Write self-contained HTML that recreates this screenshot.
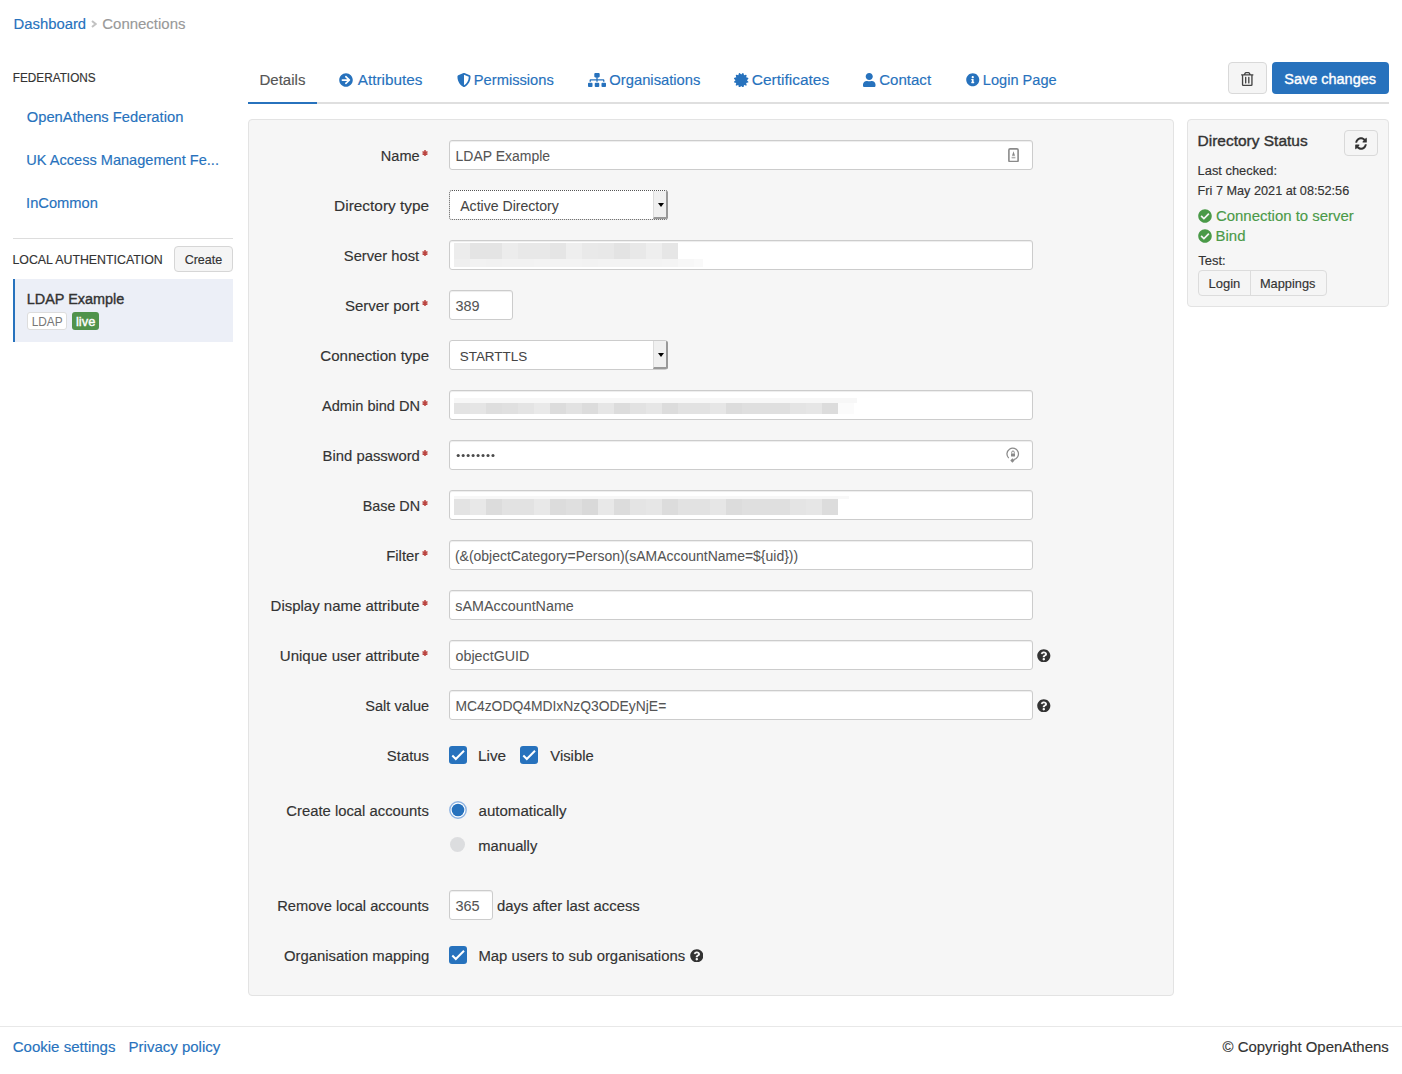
<!DOCTYPE html>
<html><head><meta charset="utf-8"><title>Connections</title>
<style>
html,body{margin:0;padding:0;background:#fff;width:1402px;height:1074px;overflow:hidden;position:relative}
body{font-family:"Liberation Sans",sans-serif}
.t{position:absolute;white-space:nowrap;line-height:1;font-family:"Liberation Sans",sans-serif}
.r{position:absolute}
</style></head><body>
<div class="t" style="left:13.51px;top:17.00px;font-size:14.858px;color:#2772bd;-webkit-text-stroke:0.15px #2772bd;">Dashboard</div>
<svg class="r" style="left:91px;top:20px;width:6px;height:8px;" viewBox="0 0 6 8" preserveAspectRatio="none"><path d="M1 1 L4.7 4 L1 7" fill="none" stroke="#c2c2c2" stroke-width="2"/></svg>
<div class="t" style="left:102.25px;top:16.01px;font-size:14.977px;color:#999999;-webkit-text-stroke:0.15px #999999;">Connections</div>
<div class="t" style="left:12.76px;top:71.82px;font-size:11.795px;color:#333333;-webkit-text-stroke:0.15px #333333;transform:scaleY(1.0445);transform-origin:0 10.03px;">FEDERATIONS</div>
<div class="t" style="left:26.74px;top:110.01px;font-size:14.755px;color:#2772bd;-webkit-text-stroke:0.15px #2772bd;">OpenAthens Federation</div>
<div class="t" style="left:26.31px;top:152.81px;font-size:14.579px;color:#2772bd;-webkit-text-stroke:0.15px #2772bd;">UK Access Management Fe...</div>
<div class="t" style="left:26.08px;top:196.00px;font-size:14.699px;color:#2772bd;-webkit-text-stroke:0.15px #2772bd;">InCommon</div>
<div class="r" style="left:13px;top:238px;width:220px;height:1px;background:#dddddd"></div>
<div class="t" style="left:12.41px;top:254.03px;font-size:12.378px;color:#333333;-webkit-text-stroke:0.15px #333333;transform:scaleY(1.0537);transform-origin:0 10.52px;">LOCAL AUTHENTICATION</div>
<div class="r" style="left:174px;top:246px;width:59px;height:26px;background:#f5f5f5;border:1px solid #d6d6d6;border-radius:4px;box-sizing:border-box"></div>
<div class="t" style="left:184.67px;top:254.01px;font-size:12.530px;color:#333333;-webkit-text-stroke:0.15px #333333;">Create</div>
<div class="r" style="left:13px;top:279px;width:220px;height:63px;background:#eceff7;border-left:2px solid #2772bd;box-sizing:border-box"></div>
<div class="t" style="left:26.79px;top:291.80px;font-size:14.439px;color:#333333;-webkit-text-stroke:0.38px #333333;">LDAP Example</div>
<div class="r" style="left:27px;top:312px;width:40px;height:18px;background:#fff;border:1px solid #dddddd;border-radius:3px;box-sizing:border-box"></div>
<div class="t" style="left:31.65px;top:317.42px;font-size:11.855px;color:#777777;-webkit-text-stroke:0px #777777;">LDAP</div>
<div class="r" style="left:72px;top:312px;width:27px;height:18px;background:#50934b;border-radius:3px"></div>
<div class="t" style="left:76.01px;top:316.41px;font-size:12.878px;color:#ffffff;-webkit-text-stroke:0.38px #ffffff;">live</div>
<div class="r" style="left:248px;top:102px;width:1141px;height:2px;background:#dfdfdf"></div>
<div class="r" style="left:248px;top:102px;width:69px;height:2px;background:#2772bd"></div>
<div class="t" style="left:259.50px;top:72.01px;font-size:15.034px;color:#555555;-webkit-text-stroke:0.15px #555555;">Details</div>
<div class="t" style="left:357.72px;top:72.00px;font-size:15.317px;color:#2772bd;-webkit-text-stroke:0.15px #2772bd;">Attributes</div>
<div class="t" style="left:473.82px;top:73.00px;font-size:14.709px;color:#2772bd;-webkit-text-stroke:0.15px #2772bd;">Permissions</div>
<div class="t" style="left:609.33px;top:73.01px;font-size:14.778px;color:#2772bd;-webkit-text-stroke:0.15px #2772bd;">Organisations</div>
<div class="t" style="left:751.72px;top:72.02px;font-size:15.504px;color:#2772bd;-webkit-text-stroke:0.15px #2772bd;">Certificates</div>
<div class="t" style="left:879.25px;top:72.02px;font-size:15.044px;color:#2772bd;-webkit-text-stroke:0.15px #2772bd;">Contact</div>
<div class="t" style="left:982.83px;top:73.01px;font-size:14.590px;color:#2772bd;-webkit-text-stroke:0.15px #2772bd;">Login Page</div>
<svg class="r" style="left:339px;top:73px;width:14px;height:14px;" viewBox="0 0 512 512" preserveAspectRatio="none"><path fill="#2772bd" d="M256 8c137 0 248 111 248 248S393 504 256 504 8 393 8 256 119 8 256 8zm-28.9 143.6l75.5 72.4H120c-13.3 0-24 10.7-24 24v16c0 13.3 10.7 24 24 24h182.6l-75.5 72.4c-9.7 9.3-9.9 24.8-.4 34.3l11 10.9c9.4 9.4 24.6 9.4 33.9 0L404.3 273c9.4-9.4 9.4-24.6 0-33.9L271.6 106.3c-9.4-9.4-24.6-9.4-33.9 0l-11 10.9c-9.5 9.6-9.3 25.1.4 34.4z"/></svg>
<svg class="r" style="left:456.5px;top:73px;width:14.0px;height:14px;" viewBox="0 0 512 512" preserveAspectRatio="none"><path fill="#2772bd" d="M466.5 83.7l-192-80a48.15 48.15 0 0 0-36.9 0l-192 80C27.7 91.1 16 108.6 16 128c0 198.5 114.5 335.7 221.5 380.3 11.8 4.9 25.1 4.9 36.9 0C360.1 472.6 496 349.3 496 128c0-19.4-11.7-36.9-29.5-44.3zM256.1 446.3l-.1-381 175.9 73.3c-3.3 151.4-82.1 261.1-175.8 307.7z"/></svg>
<svg class="r" style="left:588px;top:73px;width:18px;height:14px;" viewBox="0 0 640 512" preserveAspectRatio="none"><path fill="#2772bd" d="M128 352H32c-17.67 0-32 14.33-32 32v96c0 17.67 14.33 32 32 32h96c17.67 0 32-14.33 32-32v-96c0-17.67-14.33-32-32-32zm-24-80h192v48h48v-48h192v48h48v-57.59c0-21.17-17.23-38.41-38.41-38.41H344v-64h40c17.67 0 32-14.33 32-32V32c0-17.67-14.33-32-32-32H256c-17.67 0-32 14.33-32 32v96c0 17.67 14.33 32 32 32h40v64H94.41C73.23 224 56 241.23 56 262.41V320h48v-48zm264 80h-96c-17.67 0-32 14.33-32 32v96c0 17.67 14.33 32 32 32h96c17.67 0 32-14.33 32-32v-96c0-17.67-14.33-32-32-32zm240 0h-96c-17.67 0-32 14.33-32 32v96c0 17.67 14.33 32 32 32h96c17.67 0 32-14.33 32-32v-96c0-17.67-14.33-32-32-32z"/></svg>
<svg class="r" style="left:734.3px;top:72.8px;width:14.400000000000091px;height:14.400000000000006px;" viewBox="0 0 512 512" preserveAspectRatio="none"><path fill="#2772bd" d="M458.622 255.92l45.985-45.005c13.708-12.977 7.316-36.039-10.664-40.339l-62.65-15.99 17.661-62.015c4.991-17.838-11.829-34.663-29.661-29.671l-61.994 17.667-15.984-62.671C337.085.197 313.765-6.276 300.99 7.228L256 53.57 211.011 7.229c-12.63-13.351-36.047-7.234-40.325 10.668l-15.984 62.671-61.995-17.667C74.87 57.907 58.056 74.738 63.046 92.572l17.661 62.015-62.65 15.99C.069 174.878-6.31 197.944 7.392 210.915l45.985 45.005-45.985 45.004c-13.708 12.977-7.316 36.039 10.664 40.339l62.65 15.99-17.661 62.015c-4.991 17.838 11.829 34.663 29.661 29.671l61.994-17.667 15.984 62.671c4.439 18.575 27.696 24.018 40.325 10.668L256 458.61l44.989 46.001c12.5 13.488 35.987 7.486 40.325-10.668l15.984-62.671 61.994 17.667c17.836 4.994 34.651-11.837 29.661-29.671l-17.661-62.015 62.65-15.99c17.987-4.302 24.366-27.367 10.664-40.339l-45.984-45.004z"/></svg>
<svg class="r" style="left:863px;top:72.5px;width:12.5px;height:14.0px;" viewBox="0 0 448 512" preserveAspectRatio="none"><path fill="#2772bd" d="M224 256c70.7 0 128-57.3 128-128S294.7 0 224 0 96 57.3 96 128s57.3 128 128 128zm89.6 32h-16.7c-22.2 10.2-46.9 16-72.9 16s-50.6-5.8-72.9-16h-16.7C60.2 288 0 348.2 0 422.4V464c0 26.5 21.5 48 48 48h352c26.5 0 48-21.5 48-48v-41.6c0-74.2-60.2-134.4-134.4-134.4z"/></svg>
<svg class="r" style="left:966px;top:73px;width:13.5px;height:13.5px;" viewBox="0 0 512 512" preserveAspectRatio="none"><path fill="#2772bd" d="M256 8C119.043 8 8 119.083 8 256c0 136.997 111.043 248 248 248s248-111.003 248-248C504 119.083 392.957 8 256 8zm0 110c23.196 0 42 18.804 42 42s-18.804 42-42 42-42-18.804-42-42 18.804-42 42-42zm56 254c0 6.627-5.373 12-12 12h-88c-6.627 0-12-5.373-12-12v-24c0-6.627 5.373-12 12-12h12v-64h-12c-6.627 0-12-5.373-12-12v-24c0-6.627 5.373-12 12-12h64c6.627 0 12 5.373 12 12v100h12c6.627 0 12 5.373 12 12v24z"/></svg>
<div class="r" style="left:1228px;top:62px;width:39px;height:32px;background:#f5f5f5;border:1px solid #d9d9d9;border-radius:4px;box-sizing:border-box"></div>
<svg class="r" style="left:1241px;top:71.5px;width:12.5px;height:14.0px;" viewBox="0 0 448 512" preserveAspectRatio="none"><path fill="#444" d="M268 416h24a12 12 0 0 0 12-12V188a12 12 0 0 0-12-12h-24a12 12 0 0 0-12 12v216a12 12 0 0 0 12 12zM432 80h-82.41l-34-56.7A48 48 0 0 0 274.41 0H173.59a48 48 0 0 0-41.16 23.3L98.41 80H16A16 16 0 0 0 0 96v16a16 16 0 0 0 16 16h16v336a48 48 0 0 0 48 48h288a48 48 0 0 0 48-48V128h16a16 16 0 0 0 16-16V96a16 16 0 0 0-16-16zM171.84 50.910A6 6 0 0 1 177 48h94a6 6 0 0 1 5.15 2.91L293.61 80H154.39zM368 464H80V128h288zm-212-48h24a12 12 0 0 0 12-12V188a12 12 0 0 0-12-12h-24a12 12 0 0 0-12 12v216a12 12 0 0 0 12 12z"/></svg>
<div class="r" style="left:1272px;top:62px;width:117px;height:32px;background:#2772bd;border-radius:4px"></div>
<div class="t" style="left:1284.30px;top:72.00px;font-size:14.473px;color:#ffffff;-webkit-text-stroke:0.38px #ffffff;">Save changes</div>
<div class="r" style="left:248px;top:119px;width:926px;height:877px;background:#f6f6f6;border:1px solid #e3e3e3;border-radius:4px;box-sizing:border-box"></div>
<div class="t" style="left:380.83px;top:148.71px;font-size:14.567px;color:#333333;-webkit-text-stroke:0.15px #333333;">Name</div>
<svg class="r" style="left:421.1px;top:148.85px;width:8.0px;height:8.0px;" viewBox="0 0 8 8" preserveAspectRatio="none"><path d="M4 1.1V6.9M1.5 2.55L6.5 5.45M1.5 5.45L6.5 2.55" stroke="#bb4540" stroke-width="1.5"/></svg>
<div class="r" style="left:449px;top:140px;width:584px;height:30px;background:#fff;border:1px solid #cccccc;border-radius:3px;box-sizing:border-box;box-shadow:inset 0 1px 1px rgba(0,0,0,.075)"></div>
<div class="t" style="left:455.58px;top:149.72px;font-size:13.971px;color:#555555;-webkit-text-stroke:0.05px #555555;">LDAP Example</div>
<svg class="r" style="left:1007.5px;top:147.5px;width:11.0px;height:14.5px;" viewBox="0 0 11 14.5" preserveAspectRatio="none"><rect x="0.9" y="0.9" width="9.2" height="12.7" rx="1.2" fill="none" stroke="#8a8a8a" stroke-width="1.6"/><path d="M5.5 3.2 L7 7.8 H4 Z" fill="#8a8a8a"/><rect x="3.6" y="8.8" width="3.8" height="1.6" fill="#b0b0b0"/></svg>
<div class="t" style="left:334.07px;top:197.71px;font-size:15.430px;color:#333333;-webkit-text-stroke:0.15px #333333;">Directory type</div>
<div class="r" style="left:449px;top:190px;width:219px;height:30px;background:#fff;border:1px dotted #555;border-radius:3px;box-sizing:border-box"></div>
<div class="r" style="left:653px;top:191px;width:15px;height:28px;background:#f0f0f0;border-left:1px solid #dcdcdc;border-right:2px solid #999;border-bottom:2px solid #999;border-radius:0 2px 2px 0;box-sizing:border-box"></div>
<svg class="r" style="left:657.5px;top:202.5px;width:6.0px;height:4.0px;" viewBox="0 0 6 4" preserveAspectRatio="none"><path d="M0 0H6L3 4Z" fill="#000"/></svg>
<div class="t" style="left:460.23px;top:198.71px;font-size:14.092px;color:#444444;-webkit-text-stroke:0.05px #444444;">Active Directory</div>
<div class="t" style="left:343.84px;top:248.70px;font-size:14.723px;color:#333333;-webkit-text-stroke:0.15px #333333;">Server host</div>
<svg class="r" style="left:421.1px;top:248.85px;width:8.0px;height:8.000000000000028px;" viewBox="0 0 8 8" preserveAspectRatio="none"><path d="M4 1.1V6.9M1.5 2.55L6.5 5.45M1.5 5.45L6.5 2.55" stroke="#bb4540" stroke-width="1.5"/></svg>
<div class="r" style="left:449px;top:240px;width:584px;height:30px;background:#fff;border:1px solid #cccccc;border-radius:3px;box-sizing:border-box;box-shadow:inset 0 1px 1px rgba(0,0,0,.075)"></div>
<div class="t" style="left:344.93px;top:297.71px;font-size:14.995px;color:#333333;-webkit-text-stroke:0.15px #333333;">Server port</div>
<svg class="r" style="left:421.1px;top:298.85px;width:8.0px;height:8.0px;" viewBox="0 0 8 8" preserveAspectRatio="none"><path d="M4 1.1V6.9M1.5 2.55L6.5 5.45M1.5 5.45L6.5 2.55" stroke="#bb4540" stroke-width="1.5"/></svg>
<div class="r" style="left:449px;top:290px;width:64px;height:30px;background:#fff;border:1px solid #cccccc;border-radius:3px;box-sizing:border-box;box-shadow:inset 0 1px 1px rgba(0,0,0,.075)"></div>
<div class="t" style="left:455.52px;top:298.72px;font-size:14.430px;color:#555555;-webkit-text-stroke:0.05px #555555;">389</div>
<div class="t" style="left:320.25px;top:347.72px;font-size:15.077px;color:#333333;-webkit-text-stroke:0.15px #333333;">Connection type</div>
<div class="r" style="left:449px;top:340px;width:219px;height:30px;background:#fff;border:1px solid #cccccc;border-radius:3px;box-sizing:border-box"></div>
<div class="r" style="left:653px;top:341px;width:15px;height:28px;background:#f0f0f0;border-left:1px solid #dcdcdc;border-right:2px solid #999;border-bottom:2px solid #999;border-radius:0 2px 2px 0;box-sizing:border-box"></div>
<svg class="r" style="left:657.5px;top:352.5px;width:6.0px;height:4.0px;" viewBox="0 0 6 4" preserveAspectRatio="none"><path d="M0 0H6L3 4Z" fill="#000"/></svg>
<div class="t" style="left:459.69px;top:349.71px;font-size:13.469px;color:#444444;-webkit-text-stroke:0.05px #444444;">STARTTLS</div>
<div class="t" style="left:322.03px;top:398.71px;font-size:14.593px;color:#333333;-webkit-text-stroke:0.15px #333333;">Admin bind DN</div>
<svg class="r" style="left:421.1px;top:398.85px;width:8.0px;height:8.0px;" viewBox="0 0 8 8" preserveAspectRatio="none"><path d="M4 1.1V6.9M1.5 2.55L6.5 5.45M1.5 5.45L6.5 2.55" stroke="#bb4540" stroke-width="1.5"/></svg>
<div class="r" style="left:449px;top:390px;width:584px;height:30px;background:#fff;border:1px solid #cccccc;border-radius:3px;box-sizing:border-box;box-shadow:inset 0 1px 1px rgba(0,0,0,.075)"></div>
<div class="t" style="left:322.61px;top:448.70px;font-size:14.840px;color:#333333;-webkit-text-stroke:0.15px #333333;">Bind password</div>
<svg class="r" style="left:421.1px;top:448.85px;width:8.0px;height:8.0px;" viewBox="0 0 8 8" preserveAspectRatio="none"><path d="M4 1.1V6.9M1.5 2.55L6.5 5.45M1.5 5.45L6.5 2.55" stroke="#bb4540" stroke-width="1.5"/></svg>
<div class="r" style="left:449px;top:440px;width:584px;height:30px;background:#fff;border:1px solid #cccccc;border-radius:3px;box-sizing:border-box;box-shadow:inset 0 1px 1px rgba(0,0,0,.075)"></div>
<svg class="r" style="left:455px;top:452px;width:42px;height:7px;" viewBox="455 452 42 7" preserveAspectRatio="none"><circle cx="458.20" cy="455.5" r="1.55" fill="#4a4a4a"/><circle cx="463.17" cy="455.5" r="1.55" fill="#4a4a4a"/><circle cx="468.14" cy="455.5" r="1.55" fill="#4a4a4a"/><circle cx="473.11" cy="455.5" r="1.55" fill="#4a4a4a"/><circle cx="478.08" cy="455.5" r="1.55" fill="#4a4a4a"/><circle cx="483.05" cy="455.5" r="1.55" fill="#4a4a4a"/><circle cx="488.02" cy="455.5" r="1.55" fill="#4a4a4a"/><circle cx="492.99" cy="455.5" r="1.55" fill="#4a4a4a"/></svg>
<svg class="r" style="left:1004px;top:444px;width:18px;height:22px;" viewBox="1004 444 18 22" preserveAspectRatio="none"><path d="M1008.75 458.1 A5.75 5.75 0 1 1 1013.6 459.6" fill="none" stroke="#8a8a8a" stroke-width="1.25"/><path d="M1012.4 458.3 L1014.6 460.5 L1012.4 462.7 L1010.3 460.5Z" fill="#8a8a8a"/><path d="M1011.7 453.6 V452.3 A1.3 1.3 0 0 1 1014.3 452.3 V453.6" fill="none" stroke="#8a8a8a" stroke-width="1"/><rect x="1011" y="453.4" width="4" height="3.2" rx="0.5" fill="#8a8a8a"/></svg>
<div class="t" style="left:362.65px;top:498.70px;font-size:14.375px;color:#333333;-webkit-text-stroke:0.15px #333333;">Base DN</div>
<svg class="r" style="left:421.1px;top:498.85px;width:8.0px;height:8.0px;" viewBox="0 0 8 8" preserveAspectRatio="none"><path d="M4 1.1V6.9M1.5 2.55L6.5 5.45M1.5 5.45L6.5 2.55" stroke="#bb4540" stroke-width="1.5"/></svg>
<div class="r" style="left:449px;top:490px;width:584px;height:30px;background:#fff;border:1px solid #cccccc;border-radius:3px;box-sizing:border-box;box-shadow:inset 0 1px 1px rgba(0,0,0,.075)"></div>
<div class="t" style="left:386.21px;top:548.70px;font-size:14.871px;color:#333333;-webkit-text-stroke:0.15px #333333;">Filter</div>
<svg class="r" style="left:421.1px;top:548.85px;width:8.0px;height:8.0px;" viewBox="0 0 8 8" preserveAspectRatio="none"><path d="M4 1.1V6.9M1.5 2.55L6.5 5.45M1.5 5.45L6.5 2.55" stroke="#bb4540" stroke-width="1.5"/></svg>
<div class="r" style="left:449px;top:540px;width:584px;height:30px;background:#fff;border:1px solid #cccccc;border-radius:3px;box-sizing:border-box;box-shadow:inset 0 1px 1px rgba(0,0,0,.075)"></div>
<div class="t" style="left:454.96px;top:549.70px;font-size:13.970px;color:#555555;-webkit-text-stroke:0.05px #555555;">(&amp;(objectCategory=Person)(sAMAccountName=${uid}))</div>
<div class="t" style="left:270.60px;top:597.70px;font-size:14.982px;color:#333333;-webkit-text-stroke:0.15px #333333;">Display name attribute</div>
<svg class="r" style="left:421.1px;top:598.85px;width:8.0px;height:8.0px;" viewBox="0 0 8 8" preserveAspectRatio="none"><path d="M4 1.1V6.9M1.5 2.55L6.5 5.45M1.5 5.45L6.5 2.55" stroke="#bb4540" stroke-width="1.5"/></svg>
<div class="r" style="left:449px;top:590px;width:584px;height:30px;background:#fff;border:1px solid #cccccc;border-radius:3px;box-sizing:border-box;box-shadow:inset 0 1px 1px rgba(0,0,0,.075)"></div>
<div class="t" style="left:455.37px;top:598.71px;font-size:14.308px;color:#555555;-webkit-text-stroke:0.05px #555555;">sAMAccountName</div>
<div class="t" style="left:279.77px;top:647.70px;font-size:15.076px;color:#333333;-webkit-text-stroke:0.15px #333333;">Unique user attribute</div>
<svg class="r" style="left:421.1px;top:648.85px;width:8.0px;height:8.0px;" viewBox="0 0 8 8" preserveAspectRatio="none"><path d="M4 1.1V6.9M1.5 2.55L6.5 5.45M1.5 5.45L6.5 2.55" stroke="#bb4540" stroke-width="1.5"/></svg>
<div class="r" style="left:449px;top:640px;width:584px;height:30px;background:#fff;border:1px solid #cccccc;border-radius:3px;box-sizing:border-box;box-shadow:inset 0 1px 1px rgba(0,0,0,.075)"></div>
<div class="t" style="left:455.53px;top:648.71px;font-size:14.311px;color:#555555;-webkit-text-stroke:0.05px #555555;">objectGUID</div>
<svg class="r" style="left:1037.2px;top:648.8000000000001px;width:13.599999999999909px;height:13.599999999999909px;" viewBox="0 0 512 512" preserveAspectRatio="none"><path fill="#333" d="M504 256c0 136.997-111.043 248-248 248S8 392.997 8 256C8 119.083 119.043 8 256 8s248 111.083 248 248zM262.655 90c-54.497 0-89.255 22.957-116.549 63.758-3.536 5.286-2.353 12.415 2.715 16.258l34.699 26.310c5.205 3.947 12.621 3.008 16.665-2.122 17.864-22.658 30.113-35.797 57.303-35.797 20.429 0 45.698 13.148 45.698 32.958 0 14.976-12.363 22.667-32.534 33.976C247.128 238.528 216 254.941 216 296v4c0 6.627 5.373 12 12 12h56c6.627 0 12-5.373 12-12v-1.333c0-28.462 83.186-29.647 83.186-106.667 0-58.002-60.165-102-116.531-102zM256 338c-25.365 0-46 20.635-46 46 0 25.364 20.635 46 46 46s46-20.636 46-46c0-25.365-20.635-46-46-46z"/></svg>
<div class="t" style="left:365.35px;top:698.71px;font-size:14.535px;color:#333333;-webkit-text-stroke:0.15px #333333;">Salt value</div>
<div class="r" style="left:449px;top:690px;width:584px;height:30px;background:#fff;border:1px solid #cccccc;border-radius:3px;box-sizing:border-box;box-shadow:inset 0 1px 1px rgba(0,0,0,.075)"></div>
<div class="t" style="left:455.39px;top:699.70px;font-size:13.882px;color:#555555;-webkit-text-stroke:0.05px #555555;">MC4zODQ4MDIxNzQ3ODEyNjE=</div>
<svg class="r" style="left:1037.2px;top:698.8000000000001px;width:13.599999999999909px;height:13.599999999999909px;" viewBox="0 0 512 512" preserveAspectRatio="none"><path fill="#333" d="M504 256c0 136.997-111.043 248-248 248S8 392.997 8 256C8 119.083 119.043 8 256 8s248 111.083 248 248zM262.655 90c-54.497 0-89.255 22.957-116.549 63.758-3.536 5.286-2.353 12.415 2.715 16.258l34.699 26.310c5.205 3.947 12.621 3.008 16.665-2.122 17.864-22.658 30.113-35.797 57.303-35.797 20.429 0 45.698 13.148 45.698 32.958 0 14.976-12.363 22.667-32.534 33.976C247.128 238.528 216 254.941 216 296v4c0 6.627 5.373 12 12 12h56c6.627 0 12-5.373 12-12v-1.333c0-28.462 83.186-29.647 83.186-106.667 0-58.002-60.165-102-116.531-102zM256 338c-25.365 0-46 20.635-46 46 0 25.364 20.635 46 46 46s46-20.636 46-46c0-25.365-20.635-46-46-46z"/></svg>
<div class="t" style="left:386.83px;top:748.71px;font-size:14.882px;color:#333333;-webkit-text-stroke:0.15px #333333;">Status</div>
<div class="r" style="left:449px;top:746px;width:18px;height:18px;background:#2772bd;border-radius:3px"></div>
<svg class="r" style="left:449px;top:746px;width:18px;height:18px;" viewBox="0 0 18 18" preserveAspectRatio="none"><path d="M3.3 9.5 L6.8 13 L15 4.7" fill="none" stroke="#fff" stroke-width="2"/></svg>
<div class="t" style="left:477.97px;top:748.30px;font-size:15.380px;color:#333333;-webkit-text-stroke:0.15px #333333;">Live</div>
<div class="r" style="left:519.8px;top:746px;width:18.0px;height:18px;background:#2772bd;border-radius:3px"></div>
<svg class="r" style="left:519.8px;top:746px;width:18.0px;height:18px;" viewBox="0 0 18 18" preserveAspectRatio="none"><path d="M3.3 9.5 L6.8 13 L15 4.7" fill="none" stroke="#fff" stroke-width="2"/></svg>
<div class="t" style="left:550.33px;top:749.31px;font-size:14.817px;color:#333333;-webkit-text-stroke:0.15px #333333;">Visible</div>
<div class="t" style="left:286.26px;top:803.71px;font-size:14.848px;color:#333333;-webkit-text-stroke:0.15px #333333;">Create local accounts</div>
<svg class="r" style="left:449px;top:801px;width:18px;height:18px;" viewBox="0 0 18 18" preserveAspectRatio="none"><circle cx="9" cy="9" r="8.2" fill="#fff" stroke="#8db3e2" stroke-width="1.4"/><circle cx="9" cy="9" r="6.3" fill="#2772bd"/></svg>
<div class="t" style="left:478.52px;top:802.90px;font-size:15.073px;color:#333333;-webkit-text-stroke:0.15px #333333;">automatically</div>
<svg class="r" style="left:450.2px;top:837.2px;width:15.0px;height:15.0px;" viewBox="0 0 15 15" preserveAspectRatio="none"><circle cx="7.5" cy="7.5" r="7.5" fill="#dcdddf"/></svg>
<div class="t" style="left:478.24px;top:838.51px;font-size:14.758px;color:#333333;-webkit-text-stroke:0.15px #333333;">manually</div>
<div class="t" style="left:277.23px;top:898.71px;font-size:14.680px;color:#333333;-webkit-text-stroke:0.15px #333333;">Remove local accounts</div>
<div class="r" style="left:449px;top:890px;width:44px;height:30px;background:#fff;border:1px solid #cccccc;border-radius:3px;box-sizing:border-box;box-shadow:inset 0 1px 1px rgba(0,0,0,.075)"></div>
<div class="t" style="left:455.42px;top:898.70px;font-size:14.511px;color:#555555;-webkit-text-stroke:0.05px #555555;">365</div>
<div class="t" style="left:496.91px;top:899.00px;font-size:14.864px;color:#333333;-webkit-text-stroke:0.15px #333333;">days after last access</div>
<div class="t" style="left:283.93px;top:948.70px;font-size:14.873px;color:#333333;-webkit-text-stroke:0.15px #333333;">Organisation mapping</div>
<div class="r" style="left:449px;top:946px;width:18px;height:18px;background:#2772bd;border-radius:3px"></div>
<svg class="r" style="left:449px;top:946px;width:18px;height:18px;" viewBox="0 0 18 18" preserveAspectRatio="none"><path d="M3.3 9.5 L6.8 13 L15 4.7" fill="none" stroke="#fff" stroke-width="2"/></svg>
<div class="t" style="left:478.41px;top:949.01px;font-size:14.884px;color:#333333;-webkit-text-stroke:0.15px #333333;">Map users to sub organisations</div>
<svg class="r" style="left:689.9000000000001px;top:948.8000000000001px;width:13.599999999999909px;height:13.599999999999909px;" viewBox="0 0 512 512" preserveAspectRatio="none"><path fill="#333" d="M504 256c0 136.997-111.043 248-248 248S8 392.997 8 256C8 119.083 119.043 8 256 8s248 111.083 248 248zM262.655 90c-54.497 0-89.255 22.957-116.549 63.758-3.536 5.286-2.353 12.415 2.715 16.258l34.699 26.310c5.205 3.947 12.621 3.008 16.665-2.122 17.864-22.658 30.113-35.797 57.303-35.797 20.429 0 45.698 13.148 45.698 32.958 0 14.976-12.363 22.667-32.534 33.976C247.128 238.528 216 254.941 216 296v4c0 6.627 5.373 12 12 12h56c6.627 0 12-5.373 12-12v-1.333c0-28.462 83.186-29.647 83.186-106.667 0-58.002-60.165-102-116.531-102zM256 338c-25.365 0-46 20.635-46 46 0 25.364 20.635 46 46 46s46-20.636 46-46c0-25.365-20.635-46-46-46z"/></svg>
<div class="r" style="left:1187px;top:119px;width:202px;height:188px;background:#f6f6f6;border:1px solid #e3e3e3;border-radius:4px;box-sizing:border-box"></div>
<div class="t" style="left:1197.61px;top:132.80px;font-size:15.486px;color:#333333;-webkit-text-stroke:0.38px #333333;">Directory Status</div>
<div class="r" style="left:1344px;top:130px;width:34px;height:26px;background:#f5f5f5;border:1px solid #d9d9d9;border-radius:4px;box-sizing:border-box"></div>
<svg class="r" style="left:1355px;top:136.5px;width:12px;height:13.0px;" viewBox="0 0 512 512" preserveAspectRatio="none"><path fill="#333" d="M370.72 133.28C339.458 104.008 298.888 87.962 255.848 88c-77.458.068-144.328 53.178-162.791 126.85-1.344 5.363-6.122 9.15-11.651 9.15H24.103c-7.498 0-13.194-6.807-11.807-14.176C33.933 94.924 134.813 8 256 8c66.448 0 126.791 26.136 171.315 68.685L463.03 40.970C478.149 25.851 504 36.559 504 57.941V192c0 13.255-10.745 24-24 24H345.941c-21.382 0-32.09-25.851-16.971-40.971l41.75-41.749zM32 296h134.059c21.382 0 32.090 25.851 16.971 40.971l-41.75 41.750c31.262 29.273 71.835 45.319 114.876 45.280 77.418-.07 144.315-53.144 162.787-126.849 1.344-5.363 6.122-9.15 11.651-9.15h57.304c7.498 0 13.194 6.807 11.807 14.176C478.067 417.076 377.187 504 256 504c-66.448 0-126.791-26.136-171.315-68.685L48.970 471.030C33.851 486.149 8 475.441 8 454.059V320c0-13.255 10.745-24 24-24z"/></svg>
<div class="t" style="left:1197.57px;top:164.71px;font-size:12.883px;color:#333333;-webkit-text-stroke:0.15px #333333;">Last checked:</div>
<div class="t" style="left:1197.58px;top:184.91px;font-size:12.693px;color:#333333;-webkit-text-stroke:0.15px #333333;">Fri 7 May 2021 at 08:52:56</div>
<svg class="r" style="left:1198px;top:209px;width:14px;height:14px;" viewBox="0 0 512 512" preserveAspectRatio="none"><path fill="#4a9a48" d="M504 256c0 136.967-111.033 248-248 248S8 392.967 8 256 119.033 8 256 8s248 111.033 248 248zM227.314 387.314l184-184c6.248-6.248 6.248-16.379 0-22.627l-22.627-22.627c-6.248-6.249-16.379-6.249-22.628 0L216 308.118l-70.059-70.059c-6.248-6.248-16.379-6.248-22.628 0l-22.627 22.627c-6.248 6.248-6.248 16.379 0 22.627l104 104c6.249 6.249 16.379 6.249 22.628.001z"/></svg>
<div class="t" style="left:1215.95px;top:208.70px;font-size:14.945px;color:#4a9a48;-webkit-text-stroke:0.15px #4a9a48;">Connection to server</div>
<svg class="r" style="left:1198px;top:229px;width:14px;height:14px;" viewBox="0 0 512 512" preserveAspectRatio="none"><path fill="#4a9a48" d="M504 256c0 136.967-111.033 248-248 248S8 392.967 8 256 119.033 8 256 8s248 111.033 248 248zM227.314 387.314l184-184c6.248-6.248 6.248-16.379 0-22.627l-22.627-22.627c-6.248-6.249-16.379-6.249-22.628 0L216 308.118l-70.059-70.059c-6.248-6.248-16.379-6.248-22.628 0l-22.627 22.627c-6.248 6.248-6.248 16.379 0 22.627l104 104c6.249 6.249 16.379 6.249 22.628.001z"/></svg>
<div class="t" style="left:1215.50px;top:227.71px;font-size:14.987px;color:#4a9a48;-webkit-text-stroke:0.15px #4a9a48;">Bind</div>
<div class="t" style="left:1198.28px;top:253.91px;font-size:12.982px;color:#333333;-webkit-text-stroke:0.15px #333333;">Test:</div>
<div class="r" style="left:1198px;top:270px;width:129px;height:26px;background:#f5f5f5;border:1px solid #dcdcdc;border-radius:4px;box-sizing:border-box"></div>
<div class="r" style="left:1250px;top:270px;width:1px;height:26px;background:#dcdcdc"></div>
<div class="t" style="left:1208.46px;top:277.00px;font-size:13.000px;color:#333333;-webkit-text-stroke:0.15px #333333;">Login</div>
<div class="t" style="left:1259.98px;top:278.00px;font-size:12.796px;color:#333333;-webkit-text-stroke:0.15px #333333;">Mappings</div>
<div class="r" style="left:0px;top:1026px;width:1402px;height:1px;background:#e8e8e8"></div>
<div class="t" style="left:12.65px;top:1039.01px;font-size:15.052px;color:#2772bd;-webkit-text-stroke:0.15px #2772bd;">Cookie settings</div>
<div class="t" style="left:128.60px;top:1039.01px;font-size:15.008px;color:#2772bd;-webkit-text-stroke:0.15px #2772bd;">Privacy policy</div>
<div class="t" style="left:1222.58px;top:1040.01px;font-size:14.937px;color:#333333;-webkit-text-stroke:0.15px #333333;">© Copyright OpenAthens</div>
<div class="r" style="left:454px;top:243px;width:16px;height:16px;background:#ececec"></div>
<div class="r" style="left:470px;top:243px;width:16px;height:16px;background:#e4e4e4"></div>
<div class="r" style="left:486px;top:243px;width:16px;height:16px;background:#e4e4e4"></div>
<div class="r" style="left:502px;top:243px;width:16px;height:16px;background:#ececec"></div>
<div class="r" style="left:518px;top:243px;width:16px;height:16px;background:#e8e8e8"></div>
<div class="r" style="left:534px;top:243px;width:16px;height:16px;background:#e8e8e8"></div>
<div class="r" style="left:550px;top:243px;width:16px;height:16px;background:#e5e5e5"></div>
<div class="r" style="left:566px;top:243px;width:16px;height:16px;background:#eeeeee"></div>
<div class="r" style="left:582px;top:243px;width:16px;height:16px;background:#e9e9e9"></div>
<div class="r" style="left:598px;top:243px;width:16px;height:16px;background:#e8e8e8"></div>
<div class="r" style="left:614px;top:243px;width:16px;height:16px;background:#e3e3e3"></div>
<div class="r" style="left:630px;top:243px;width:16px;height:16px;background:#e8e8e8"></div>
<div class="r" style="left:646px;top:243px;width:16px;height:16px;background:#eeeeee"></div>
<div class="r" style="left:662px;top:243px;width:16px;height:16px;background:#e6e6e6"></div>
<div class="r" style="left:454px;top:259px;width:16px;height:8px;background:#efefef"></div>
<div class="r" style="left:470px;top:259px;width:16px;height:8px;background:#f2f2f2"></div>
<div class="r" style="left:486px;top:259px;width:16px;height:8px;background:#f1f1f1"></div>
<div class="r" style="left:502px;top:259px;width:16px;height:8px;background:#f2f2f2"></div>
<div class="r" style="left:518px;top:259px;width:16px;height:8px;background:#f2f2f2"></div>
<div class="r" style="left:534px;top:259px;width:16px;height:8px;background:#f3f3f3"></div>
<div class="r" style="left:550px;top:259px;width:16px;height:8px;background:#f3f3f3"></div>
<div class="r" style="left:566px;top:259px;width:16px;height:8px;background:#f3f3f3"></div>
<div class="r" style="left:582px;top:259px;width:16px;height:8px;background:#f2f2f2"></div>
<div class="r" style="left:598px;top:259px;width:16px;height:8px;background:#f3f3f3"></div>
<div class="r" style="left:614px;top:259px;width:16px;height:8px;background:#f3f3f3"></div>
<div class="r" style="left:630px;top:259px;width:16px;height:8px;background:#f3f3f3"></div>
<div class="r" style="left:646px;top:259px;width:16px;height:8px;background:#f3f3f3"></div>
<div class="r" style="left:662px;top:259px;width:16px;height:8px;background:#f4f4f4"></div>
<div class="r" style="left:678px;top:259px;width:16px;height:8px;background:#f7f7f7"></div>
<div class="r" style="left:694px;top:259px;width:9px;height:8px;background:#f9f9f9"></div>
<div class="r" style="left:454px;top:398px;width:16px;height:5px;background:#f7f7f7"></div>
<div class="r" style="left:470px;top:398px;width:16px;height:5px;background:#f7f7f7"></div>
<div class="r" style="left:486px;top:398px;width:16px;height:5px;background:#f7f7f7"></div>
<div class="r" style="left:502px;top:398px;width:16px;height:5px;background:#f7f7f7"></div>
<div class="r" style="left:518px;top:398px;width:16px;height:5px;background:#f7f7f7"></div>
<div class="r" style="left:534px;top:398px;width:16px;height:5px;background:#f7f7f7"></div>
<div class="r" style="left:550px;top:398px;width:16px;height:5px;background:#f7f7f7"></div>
<div class="r" style="left:566px;top:398px;width:16px;height:5px;background:#f7f7f7"></div>
<div class="r" style="left:582px;top:398px;width:16px;height:5px;background:#f7f7f7"></div>
<div class="r" style="left:598px;top:398px;width:16px;height:5px;background:#f7f7f7"></div>
<div class="r" style="left:614px;top:398px;width:16px;height:5px;background:#f7f7f7"></div>
<div class="r" style="left:630px;top:398px;width:16px;height:5px;background:#f7f7f7"></div>
<div class="r" style="left:646px;top:398px;width:16px;height:5px;background:#f7f7f7"></div>
<div class="r" style="left:662px;top:398px;width:16px;height:5px;background:#f7f7f7"></div>
<div class="r" style="left:678px;top:398px;width:16px;height:5px;background:#f7f7f7"></div>
<div class="r" style="left:694px;top:398px;width:16px;height:5px;background:#f7f7f7"></div>
<div class="r" style="left:710px;top:398px;width:16px;height:5px;background:#f7f7f7"></div>
<div class="r" style="left:726px;top:398px;width:16px;height:5px;background:#f7f7f7"></div>
<div class="r" style="left:742px;top:398px;width:16px;height:5px;background:#f7f7f7"></div>
<div class="r" style="left:758px;top:398px;width:16px;height:5px;background:#f7f7f7"></div>
<div class="r" style="left:774px;top:398px;width:16px;height:5px;background:#f7f7f7"></div>
<div class="r" style="left:790px;top:398px;width:16px;height:5px;background:#f7f7f7"></div>
<div class="r" style="left:806px;top:398px;width:16px;height:5px;background:#f7f7f7"></div>
<div class="r" style="left:822px;top:398px;width:16px;height:5px;background:#f7f7f7"></div>
<div class="r" style="left:838px;top:398px;width:16px;height:5px;background:#f7f7f7"></div>
<div class="r" style="left:854px;top:398px;width:3px;height:5px;background:#f7f7f7"></div>
<div class="r" style="left:454px;top:403px;width:16px;height:11px;background:#e3e3e3"></div>
<div class="r" style="left:470px;top:403px;width:16px;height:11px;background:#e5e5e5"></div>
<div class="r" style="left:486px;top:403px;width:16px;height:11px;background:#dedede"></div>
<div class="r" style="left:502px;top:403px;width:16px;height:11px;background:#e0e0e0"></div>
<div class="r" style="left:518px;top:403px;width:16px;height:11px;background:#e4e4e4"></div>
<div class="r" style="left:534px;top:403px;width:16px;height:11px;background:#e9e9e9"></div>
<div class="r" style="left:550px;top:403px;width:16px;height:11px;background:#dcdcdc"></div>
<div class="r" style="left:566px;top:403px;width:16px;height:11px;background:#e2e2e2"></div>
<div class="r" style="left:582px;top:403px;width:16px;height:11px;background:#dcdcdc"></div>
<div class="r" style="left:598px;top:403px;width:16px;height:11px;background:#e6e6e6"></div>
<div class="r" style="left:614px;top:403px;width:16px;height:11px;background:#dcdcdc"></div>
<div class="r" style="left:630px;top:403px;width:16px;height:11px;background:#e2e2e2"></div>
<div class="r" style="left:646px;top:403px;width:16px;height:11px;background:#e6e6e6"></div>
<div class="r" style="left:662px;top:403px;width:16px;height:11px;background:#dcdcdc"></div>
<div class="r" style="left:678px;top:403px;width:16px;height:11px;background:#e2e2e2"></div>
<div class="r" style="left:694px;top:403px;width:16px;height:11px;background:#e2e2e2"></div>
<div class="r" style="left:710px;top:403px;width:16px;height:11px;background:#e6e6e6"></div>
<div class="r" style="left:726px;top:403px;width:16px;height:11px;background:#dcdcdc"></div>
<div class="r" style="left:742px;top:403px;width:16px;height:11px;background:#dfdfdf"></div>
<div class="r" style="left:758px;top:403px;width:16px;height:11px;background:#dfdfdf"></div>
<div class="r" style="left:774px;top:403px;width:16px;height:11px;background:#dfdfdf"></div>
<div class="r" style="left:790px;top:403px;width:16px;height:11px;background:#e4e4e4"></div>
<div class="r" style="left:806px;top:403px;width:16px;height:11px;background:#e6e6e6"></div>
<div class="r" style="left:822px;top:403px;width:16px;height:11px;background:#dcdcdc"></div>
<div class="r" style="left:838px;top:403px;width:16px;height:11px;background:#fbfbfb"></div>
<div class="r" style="left:454px;top:496px;width:16px;height:3px;background:#f7f7f7"></div>
<div class="r" style="left:470px;top:496px;width:16px;height:3px;background:#f7f7f7"></div>
<div class="r" style="left:486px;top:496px;width:16px;height:3px;background:#f7f7f7"></div>
<div class="r" style="left:502px;top:496px;width:16px;height:3px;background:#f7f7f7"></div>
<div class="r" style="left:518px;top:496px;width:16px;height:3px;background:#f7f7f7"></div>
<div class="r" style="left:534px;top:496px;width:16px;height:3px;background:#f7f7f7"></div>
<div class="r" style="left:550px;top:496px;width:16px;height:3px;background:#f7f7f7"></div>
<div class="r" style="left:566px;top:496px;width:16px;height:3px;background:#f7f7f7"></div>
<div class="r" style="left:582px;top:496px;width:16px;height:3px;background:#f7f7f7"></div>
<div class="r" style="left:598px;top:496px;width:16px;height:3px;background:#f7f7f7"></div>
<div class="r" style="left:614px;top:496px;width:16px;height:3px;background:#f7f7f7"></div>
<div class="r" style="left:630px;top:496px;width:16px;height:3px;background:#f7f7f7"></div>
<div class="r" style="left:646px;top:496px;width:16px;height:3px;background:#f7f7f7"></div>
<div class="r" style="left:662px;top:496px;width:16px;height:3px;background:#f7f7f7"></div>
<div class="r" style="left:678px;top:496px;width:16px;height:3px;background:#f7f7f7"></div>
<div class="r" style="left:694px;top:496px;width:16px;height:3px;background:#f7f7f7"></div>
<div class="r" style="left:710px;top:496px;width:16px;height:3px;background:#f7f7f7"></div>
<div class="r" style="left:726px;top:496px;width:16px;height:3px;background:#f7f7f7"></div>
<div class="r" style="left:742px;top:496px;width:16px;height:3px;background:#f7f7f7"></div>
<div class="r" style="left:758px;top:496px;width:16px;height:3px;background:#f7f7f7"></div>
<div class="r" style="left:774px;top:496px;width:16px;height:3px;background:#f7f7f7"></div>
<div class="r" style="left:790px;top:496px;width:16px;height:3px;background:#f7f7f7"></div>
<div class="r" style="left:806px;top:496px;width:16px;height:3px;background:#f7f7f7"></div>
<div class="r" style="left:822px;top:496px;width:16px;height:3px;background:#f7f7f7"></div>
<div class="r" style="left:838px;top:496px;width:11px;height:3px;background:#f8f8f8"></div>
<div class="r" style="left:454px;top:499px;width:16px;height:16px;background:#e3e3e3"></div>
<div class="r" style="left:470px;top:499px;width:16px;height:16px;background:#e8e8e8"></div>
<div class="r" style="left:486px;top:499px;width:16px;height:16px;background:#dcdcdc"></div>
<div class="r" style="left:502px;top:499px;width:16px;height:16px;background:#e2e2e2"></div>
<div class="r" style="left:518px;top:499px;width:16px;height:16px;background:#e2e2e2"></div>
<div class="r" style="left:534px;top:499px;width:16px;height:16px;background:#e8e8e8"></div>
<div class="r" style="left:550px;top:499px;width:16px;height:16px;background:#dcdcdc"></div>
<div class="r" style="left:566px;top:499px;width:16px;height:16px;background:#dfdfdf"></div>
<div class="r" style="left:582px;top:499px;width:16px;height:16px;background:#d9d9d9"></div>
<div class="r" style="left:598px;top:499px;width:16px;height:16px;background:#e8e8e8"></div>
<div class="r" style="left:614px;top:499px;width:16px;height:16px;background:#dcdcdc"></div>
<div class="r" style="left:630px;top:499px;width:16px;height:16px;background:#e4e4e4"></div>
<div class="r" style="left:646px;top:499px;width:16px;height:16px;background:#e6e6e6"></div>
<div class="r" style="left:662px;top:499px;width:16px;height:16px;background:#dcdcdc"></div>
<div class="r" style="left:678px;top:499px;width:16px;height:16px;background:#e2e2e2"></div>
<div class="r" style="left:694px;top:499px;width:16px;height:16px;background:#e2e2e2"></div>
<div class="r" style="left:710px;top:499px;width:16px;height:16px;background:#e6e6e6"></div>
<div class="r" style="left:726px;top:499px;width:16px;height:16px;background:#dcdcdc"></div>
<div class="r" style="left:742px;top:499px;width:16px;height:16px;background:#dfdfdf"></div>
<div class="r" style="left:758px;top:499px;width:16px;height:16px;background:#dfdfdf"></div>
<div class="r" style="left:774px;top:499px;width:16px;height:16px;background:#dfdfdf"></div>
<div class="r" style="left:790px;top:499px;width:16px;height:16px;background:#e4e4e4"></div>
<div class="r" style="left:806px;top:499px;width:16px;height:16px;background:#e6e6e6"></div>
<div class="r" style="left:822px;top:499px;width:16px;height:16px;background:#dcdcdc"></div>
</body></html>
